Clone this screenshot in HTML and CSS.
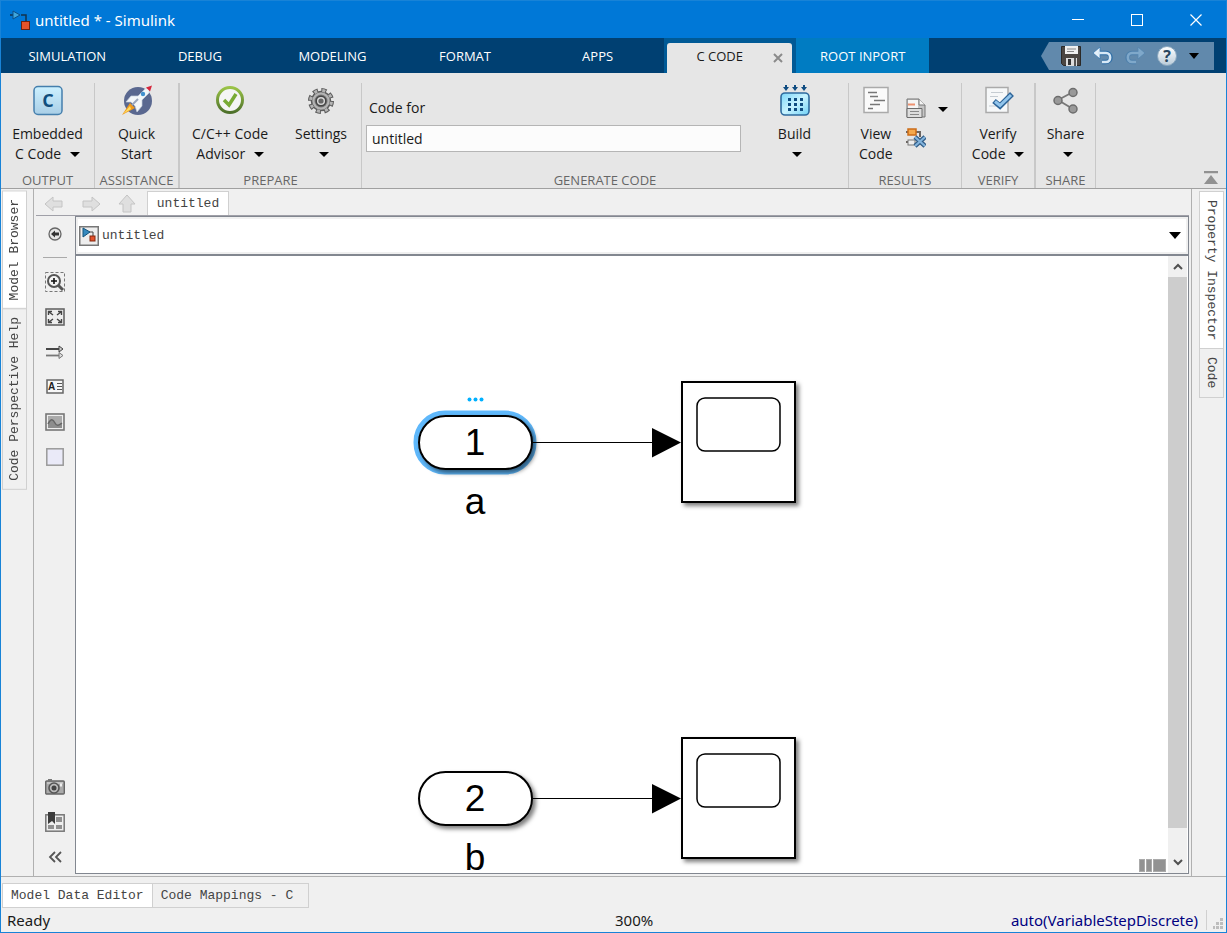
FILE: index.html
```html
<!DOCTYPE html>
<html lang="en">
<head>
<meta charset="utf-8">
<title>untitled * - Simulink</title>
<link rel="stylesheet" href="styles.css">
</head>
<body>
<div class="window">
  <header class="titlebar">
    <svg class="app-icon" width="20" height="20" viewBox="0 0 20 20"><path d="M0 5h5M11 5h5v6" fill="none" stroke="#12324e" stroke-width="1.5"/><path d="M3 1l7 4-7 4z" fill="#3fa6dc" stroke="#0d4f86"/><rect x="11.500" y="11.500" width="8" height="8" fill="#e5532a" stroke="#6d2210"/></svg>
    <h1 class="title">untitled * - Simulink</h1>
    <div class="window-buttons">
      <button aria-label="Minimize"><svg width="12" height="12"><path d="M0 5.500h12" stroke="#fff"/></svg></button>
      <button aria-label="Maximize"><svg width="12" height="12"><rect x=".5" y=".5" width="11" height="11" fill="none" stroke="#fff"/></svg></button>
      <button aria-label="Close"><svg width="12" height="12"><path d="M.5.5l11 11M11.500.5l-11 11" stroke="#fff" stroke-width="1.200"/></svg></button>
    </div>
  </header>

  <div class="tabbar">
    <nav class="tabs">
      <button class="tab">SIMULATION</button>
      <button class="tab">DEBUG</button>
      <button class="tab">MODELING</button>
      <button class="tab">FORMAT</button>
      <button class="tab">APPS</button>
      <div class="tab-slot">
        <button class="tab tab-active">C CODE</button>
        <button class="tab-close" aria-label="Close tab"><svg width="10" height="10"><path d="M1 1l8 8M9 1l-8 8" stroke="#8a8a8a" stroke-width="2"/></svg></button>
      </div>
      <button class="tab tab-context">ROOT INPORT</button>
    </nav>
    <div class="quick">
      <svg class="quick-tip" width="8" height="28"><path d="M8 0L0 14l8 14z" fill="#6189ac"/></svg>
      <div class="quick-body">
        <button aria-label="Save"><svg width="20" height="20"><path d="M.5.5h19v19h-17l-2-2z" fill="#4b4642" stroke="#2b2927"/><rect x="4" y="0" width="13" height="8" fill="#efefef"/><path d="M6 3h9M6 5.500h7" stroke="#888"/><rect x="5" y="12" width="11" height="8" fill="#ddd"/><rect x="7" y="13" width="3" height="6" fill="#333"/><rect x="13" y="12" width="2" height="8" fill="#555"/></svg></button>
        <button aria-label="Undo"><svg width="20" height="18"><g fill="none" stroke="#2f6ea6" stroke-width="4.500"><path d="M5 6h8c6 0 6 9 0 9h-4"/></g><path d="M7 0v12L0 6z" fill="#e6f1fa" stroke="#3b7ab0" stroke-width=".8"/><path d="M5 6h8c5.500 0 5.500 9 0 9h-4" fill="none" stroke="#d8e9f7" stroke-width="2.600"/></svg></button>
        <button aria-label="Redo"><svg width="20" height="18"><path d="M15 6H7c-6 0-6 9 0 9h4" fill="none" stroke="#4f80ab" stroke-width="4.500"/><path d="M13 0v12l7-6z" fill="#7fa8ca" stroke="#5585ae" stroke-width=".8"/><path d="M15 6H7c-5.500 0-5.500 9 0 9h4" fill="none" stroke="#7fa8ca" stroke-width="2.600"/></svg></button>
        <button aria-label="Help"><svg width="20" height="20"><defs><linearGradient id="help" x2="0" y2="1"><stop stop-color="#fff"/><stop offset="1" stop-color="#b9cbd9"/></linearGradient></defs><circle cx="10" cy="10" r="9.500" fill="url(#help)" stroke="#87a5bd"/><text x="10" y="16" class="help-mark">?</text></svg></button>
        <button aria-label="More help"><svg width="10" height="6"><path d="M0 0h10L5 6z"/></svg></button>
      </div>
    </div>
  </div>

  <section class="ribbon">
    <div class="group group-output">
      <button class="tool">
        <svg width="32" height="32"><defs><linearGradient id="cc" x2="0" y2="1"><stop stop-color="#cdf1ff"/><stop offset="1" stop-color="#a9cee6"/></linearGradient></defs><rect x="2" y="1.500" width="28" height="28" rx="4" fill="url(#cc)" stroke="#457fad" stroke-width="1.500"/><text x="16" y="22" class="c-mark">C</text></svg>
        <span>Embedded</span><span>C Code <i class="caret"></i></span>
      </button>
      <p class="group-name">OUTPUT</p>
    </div>
    <div class="group group-assist">
      <button class="tool">
        <svg width="32" height="32"><circle cx="17" cy="16" r="14" fill="#5a6890"/><path d="M9 18L1 30l13-7z" fill="#ef9a1d"/><path d="M9 21L2 29l8-5z" fill="#fddc62"/><path d="M5 17l5-6h7l7-7 5-1-1 5-7 7v6l-5 6-2-6-4-4z" fill="#f4f7fa" stroke="#c3cddb" stroke-width=".7"/><path d="M25 2.500l6-2-2 6z" fill="#d6263b"/><circle cx="22" cy="9" r="2.200" fill="#4191cf"/><path d="M11 20l6-6" stroke="#9aa6bc" stroke-width="2"/></svg>
        <span>Quick</span><span>Start</span>
      </button>
      <p class="group-name">ASSISTANCE</p>
    </div>
    <div class="group group-prepare">
      <div class="tools">
        <button class="tool">
          <svg width="32" height="32"><defs><linearGradient id="ok" x2="0" y2="1"><stop stop-color="#9ac347"/><stop offset="1" stop-color="#4d702a"/></linearGradient></defs><circle cx="16" cy="15" r="12.500" fill="#f5f5f5" stroke="url(#ok)" stroke-width="3"/><path d="M10 15l5 5 7-11" fill="none" stroke="#79ab35" stroke-width="3.500"/></svg>
          <span>C/C++ Code</span><span>Advisor <i class="caret"></i></span>
        </button>
        <button class="tool">
          <svg width="32" height="32"><g transform="translate(16 16)"><circle r="11" fill="none" stroke="#5c5c5c" stroke-width="4" stroke-dasharray="5.200 3.439"/><circle r="9.500" fill="#b4b4b4" stroke="#5c5c5c" stroke-width="1.600"/><circle r="10.500" fill="none" stroke="#b4b4b4" stroke-width="3" stroke-dasharray="3 5.247" stroke-dashoffset="-1"/><circle r="6.500" fill="#777"/><circle r="4.800" fill="#d8d8d8" stroke="#444" stroke-width="1.500"/><circle r="2.600" fill="#666"/></g></svg>
          <span>Settings</span><span><i class="caret"></i></span>
        </button>
      </div>
      <p class="group-name">PREPARE</p>
    </div>
    <div class="group group-generate">
      <div class="tools">
        <div class="field">
          <label for="model">Code for</label>
          <input id="model" type="text" value="untitled">
        </div>
        <button class="tool tool-build">
          <svg width="32" height="32"><defs><linearGradient id="bd" x2="1" y2="1"><stop stop-color="#7bd6fa"/><stop offset=".5" stop-color="#c8f3ff"/><stop offset="1" stop-color="#6fd0f5"/></linearGradient></defs><rect x="2" y="8" width="28" height="22" rx="4" fill="url(#bd)" stroke="#2f6b9f" stroke-width="1.600"/><g fill="#0f4c81"><path d="M6 0h2v2h2l-3 4-3-4h2zM15 0h2v2h2l-3 4-3-4h2zM24 0h2v2h2l-3 4-3-4h2z"/><path d="M9 13h3v3H9zM15 13h3v3h-3zM21 13h3v3h-3zM9 18h3v3H9zM15 18h3v3h-3zM21 18h3v3h-3zM9 23h3v3H9zM15 23h3v3h-3zM21 23h3v3h-3z"/></g></svg>
          <span>Build</span><span><i class="caret"></i></span>
        </button>
      </div>
      <p class="group-name">GENERATE CODE</p>
    </div>
    <div class="group group-results">
      <div class="tools">
        <button class="tool">
          <svg width="32" height="32"><rect x="4" y="2.500" width="24" height="25" fill="#fafafa" stroke="#aaa" stroke-width="1.500"/><path d="M8 7.500h9M10 11.500h8M14 15.500h7M19 15.500h6M10 19.500h10M8 23.500h5" stroke="#777" stroke-width="1.300"/></svg>
          <span>View</span><span>Code</span>
        </button>
        <div class="small-tools">
          <button aria-label="Open report"><svg width="20" height="20"><path d="M1 1h12l6 6v12H1z" fill="#c6c6c6" stroke="#777"/><path d="M2 2h10v9H2z" fill="#f5f5f5"/><path d="M2 6.500h7" stroke="#ee9270" stroke-width="2"/><path d="M13 1v6h6" fill="#f4f4f4" stroke="#777"/><path d="M1 10.500h15v9H1z" fill="#ddd" stroke="#6c6c6c"/><path d="M4 13.500h9M4 16.500h9" stroke="#888"/></svg></button>
          <button aria-label="Report options"><i class="caret"></i></button>
          <button aria-label="Remove highlighting"><svg width="20" height="20"><path d="M0 4h14v5M0 14h8" fill="none" stroke="#6b6560" stroke-width="2"/><rect x="2" y="1" width="8" height="6" fill="#f5a94c" stroke="#cb6c18" stroke-width="1.500"/><rect x="2" y="12" width="7" height="5" fill="#eee" stroke="#777"/><path d="M9 9l10 9M19 9L9 18" stroke="#315d87" stroke-width="4.500"/><path d="M9 9l10 9M19 9L9 18" stroke="#82b3dc" stroke-width="2.200"/></svg></button>
        </div>
      </div>
      <p class="group-name">RESULTS</p>
    </div>
    <div class="group group-verify">
      <button class="tool">
        <svg width="32" height="32"><rect x="4" y="2.500" width="22" height="25" fill="#f6f8f9" stroke="#aaa" stroke-width="1.500"/><path d="M9 7.500h12M8 11.500h8M7 21h7" stroke="#c5ccd2"/><path d="M12 16l6 5L30 9" fill="none" stroke="#2d6498" stroke-width="5.500"/><path d="M13 16.500l5 4L29 10" fill="none" stroke="#92c5ec" stroke-width="3"/></svg>
        <span>Verify</span><span>Code <i class="caret"></i></span>
      </button>
      <p class="group-name">VERIFY</p>
    </div>
    <div class="group group-share">
      <button class="tool">
        <svg width="32" height="32"><path d="M23 7L8 15l15 9" fill="none" stroke="#777" stroke-width="1.800"/><g fill="#999" stroke="#6d6d6d" stroke-width="1.500"><circle cx="23" cy="7.500" r="4"/><circle cx="8" cy="15.500" r="4"/><circle cx="23" cy="24" r="4"/></g></svg>
        <span>Share</span><span><i class="caret"></i></span>
      </button>
      <p class="group-name">SHARE</p>
    </div>
    <div class="ribbon-end">
      <button aria-label="Collapse ribbon"><svg width="14" height="13"><path d="M0 1h14" stroke="#919191" stroke-width="2.500"/><path d="M7 4l7 9H0z" fill="#919191"/></svg></button>
    </div>
  </section>

  <main class="workspace">
    <aside class="dock dock-left">
      <button class="side-tab side-selected">Model Browser</button>
      <button class="side-tab">Code Perspective Help</button>
    </aside>

    <div class="editor">
      <div class="nav">
        <div class="nav-arrows">
          <button aria-label="Back"><svg width="20" height="16"><path d="M1 8l8-7v4h9v6H9v4z" fill="#dfdfdf" stroke="#c4c4c4"/></svg></button>
          <button aria-label="Forward"><svg width="20" height="16"><path d="M19 8l-8-7v4H2v6h9v4z" fill="#dfdfdf" stroke="#c4c4c4"/></svg></button>
          <button aria-label="Up"><svg width="18" height="20"><path d="M9 1l8 9h-4v8H5v-8H1z" fill="#dfdfdf" stroke="#c4c4c4"/></svg></button>
        </div>
        <button class="doc-tab">untitled</button>
      </div>

      <div class="editor-body">
        <div class="palette">
          <button aria-label="Hide browser"><svg width="14" height="14"><circle cx="7" cy="7" r="6" fill="#e6e6e6" stroke="#666" stroke-width="1.300"/><path d="M3 7l4-3.500v2h4v3H7v2z" fill="#333"/></svg></button>
          <hr>
          <button aria-label="Zoom"><svg width="20" height="20"><rect x=".5" y=".5" width="19" height="19" fill="none" stroke="#777" stroke-dasharray="3 2"/><circle cx="9" cy="9" r="6" fill="#f4f4f4" stroke="#555" stroke-width="2"/><path d="M13 13l5 5" stroke="#555" stroke-width="3"/><path d="M6 9h6M9 6v6" stroke="#111" stroke-width="1.600"/></svg></button>
          <button aria-label="Fit to view"><svg width="20" height="18"><rect x="1" y="1" width="18" height="16" fill="#eee" stroke="#666" stroke-width="1.600"/><path d="M3.500 7V3.500H7M4 4l4 3M13 3.500h3.500V7M16 4l-4 3M3.500 11v3.500H7M4 14l4-3M13 14.500h3.500V11M16 14l-4-3" fill="none" stroke="#444" stroke-width="1.400"/></svg></button>
          <button aria-label="Sample time"><svg width="20" height="14"><path d="M1 4h16" stroke="#333" stroke-width="1.800"/><path d="M1 10.500h16" stroke="#777" stroke-width="1.800"/><path d="M14 1l4 3-4 3z" fill="#ccc" stroke="#444"/><path d="M14 7.500l4 3-4 3z" fill="#ddd" stroke="#777"/></svg></button>
          <button aria-label="Annotation"><svg width="18" height="15"><rect x="1" y="1" width="16" height="13" fill="#f7f7f7" stroke="#666" stroke-width="1.500"/><text x="2" y="11" class="a-mark">A</text><path d="M11 4.500h5M11 7.500h5M11 10.500h5" stroke="#555"/></svg></button>
          <button aria-label="Image"><svg width="20" height="18"><rect x="1" y="1" width="18" height="16" fill="#eee" stroke="#777" stroke-width="1.600"/><path d="M3 3h14v12H3z" fill="#aaa"/><path d="M3 11c3-6 5-5 7-1s4 2 7 0v5H3z" fill="#8d8d8d"/><path d="M3 11c3-6 5-5 7-1s4 2 7 0" fill="none" stroke="#666" stroke-width="1.500"/></svg></button>
          <button aria-label="Area"><svg width="18" height="18"><rect x=".8" y=".8" width="16.400" height="16.400" fill="#eaeaf8" stroke="#999" stroke-width="1.500"/></svg></button>
          <span class="palette-space"></span>
          <button aria-label="Screenshot"><svg width="20" height="16"><rect x=".7" y="2" width="18.600" height="13" rx="1" fill="#aaa" stroke="#666" stroke-width="1.400"/><path d="M3 0h4v2H3z" fill="#777"/><path d="M2 4h16" stroke="#ddd"/><circle cx="9" cy="9" r="5" fill="#bbb" stroke="#555" stroke-width="1.600"/><circle cx="9" cy="9" r="2.500" fill="#444"/><path d="M16 4.500v3" stroke="#eee" stroke-width="2"/></svg></button>
          <button aria-label="Bookmarks"><svg width="20" height="20"><rect x=".8" y="2.800" width="18.400" height="16.400" fill="#eee" stroke="#777" stroke-width="1.500"/><path d="M11 5h6v5h-6zM3 13h6v4H3zM11 13h6v4h-6z" fill="#909090"/><path d="M3 0h7v12l-3-3-4 3z" fill="#3c3c3c"/></svg></button>
          <button aria-label="Collapse palette"><svg width="14" height="12"><path d="M7 1L2 6l5 5M13 1L8 6l5 5" fill="none" stroke="#555" stroke-width="1.800"/></svg></button>
        </div>

        <div class="stage">
          <div class="pathbar">
            <svg width="20" height="20"><rect x=".75" y=".75" width="18.500" height="18.500" fill="#eee" stroke="#777" stroke-width="1.500"/><path d="M10 6h4v4" fill="none" stroke="#444"/><path d="M4 2l7 4-7 5z" fill="#3589be" stroke="#15547d"/><rect x="11" y="10" width="5" height="5" fill="#e4522c" stroke="#84290f"/></svg>
            <select aria-label="Model path"><option>untitled</option></select>
            <svg class="path-caret" width="12" height="7"><path d="M0 0h12L6 7z"/></svg>
          </div>
          <div class="canvas-row">
            <div class="canvas">
              <svg class="diagram">
                <defs>
                  <filter id="shadow" x="-20%" y="-20%" width="150%" height="150%"><feDropShadow dx="3" dy="3" stdDeviation="2" flood-opacity=".5"/></filter>
                  <g id="scope">
                    <rect x="606" y="126" width="113" height="120" fill="#fff" stroke="#000" stroke-width="2" filter="url(#shadow)"/>
                    <rect x="621" y="142" width="83" height="53" rx="8" fill="#fff" stroke="#000" stroke-width="1.500"/>
                    <path d="M457 186.500h120" stroke="#000"/>
                    <path d="M576 172l29 14.500-29 15z"/>
                  </g>
                </defs>
                <rect x="340" y="157" width="118" height="59" rx="29" fill="none" stroke="#5fb8fb" stroke-width="5"/>
                <rect x="343" y="160" width="113" height="53" rx="26.500" fill="#fff" stroke="#000" stroke-width="2" filter="url(#shadow)"/>
                <g fill="#00b0ff"><circle cx="393.500" cy="143.500" r="2"/><circle cx="399.500" cy="143.500" r="2"/><circle cx="405.500" cy="143.500" r="2"/></g>
                <text x="399" y="199">1</text>
                <text x="399" y="258">a</text>
                <use href="#scope"/>
                <rect x="343" y="516" width="113" height="53" rx="26.500" fill="#fff" stroke="#000" stroke-width="2" filter="url(#shadow)"/>
                <text x="399" y="555">2</text>
                <text x="399" y="614">b</text>
                <use href="#scope" y="356"/>
              </svg>
              <div class="meter"><i></i><i></i><i class="wide"></i></div>
            </div>
            <div class="scrollbar">
              <button aria-label="Scroll up"><svg width="10" height="7"><path d="M1 6l4-4 4 4" fill="none" stroke="#505050" stroke-width="2"/></svg></button>
              <div class="thumb"></div>
              <button class="scroll-down" aria-label="Scroll down"><svg width="10" height="7"><path d="M1 1l4 4 4-4" fill="none" stroke="#505050" stroke-width="2"/></svg></button>
            </div>
          </div>
        </div>
      </div>
    </div>

    <aside class="dock dock-right">
      <button class="side-tab side-selected">Property Inspector</button>
      <button class="side-tab">Code</button>
    </aside>
  </main>

  <div class="bottom-tabs">
    <button class="bottom-tab bottom-selected">Model Data Editor</button>
    <button class="bottom-tab">Code Mappings - C</button>
  </div>
  <footer class="status">
    <span>Ready</span>
    <span class="zoom">300%</span>
    <span class="solver">auto(VariableStepDiscrete)</span>
    <svg class="grip" width="10" height="11" fill="#bdbdbd"><path d="M7 0h3v3H7zM7 4h3v3H7zM7 8h3v3H7zM3 4h3v3H3zM3 8h3v3H3zM0 8h2v3H0z"/></svg>
  </footer>
</div>
</body>
</html>
```

FILE: styles.css
```css
* { box-sizing: border-box; }

body {
  margin: 0;
  font-family: "Open Sans", "Noto Sans", sans-serif;
  font-size: 14px;
  color: #1a1a1a;
}

button {
  margin: 0;
  padding: 0;
  border: 0;
  background: none;
  color: inherit;
  font: inherit;
}

svg { display: block; }

.window {
  display: flex;
  flex-direction: column;
  height: 100vh;
  border: 1px solid #1883d7;
  background: #f0f0f0;
}

/* Title bar */
.titlebar {
  display: flex;
  align-items: center;
  height: 37px;
  padding: 0 1px 0 9px;
  background: #0078d7;
  color: #fff;
}
.title {
  flex: 1;
  margin: 0 0 0 5px;
  font-family: "Noto Sans", sans-serif;
  font-size: 15px;
  font-weight: 400;
}
.window-buttons { display: flex; }
.window-buttons button {
  display: grid;
  place-items: center;
  width: 59px;
  height: 37px;
}

/* Tab bar */
.tabbar {
  display: flex;
  height: 35px;
  background: #004072;
}
.tabs { display: flex; flex: 1; }
.tab {
  flex: 1;
  color: #fff;
  font-size: 13px;
  font-weight: 500;
}
.tab-slot {
  display: flex;
  flex: 1;
  position: relative;
  background: #005a96;
}
.tab-active {
  margin: 5px 4px 0 3px;
  padding: 0 20px 5px 0;
  border-radius: 3px 3px 0 0;
  background: #e6e6e6;
  color: #1a1a1a;
  font-weight: 400;
}
.tab-close { position: absolute; right: 13px; top: 15px; }
.tab-context { background: #007cc2; }

.quick {
  display: flex;
  justify-content: flex-end;
  width: 297px;
  padding: 4px 12px 3px 0;
}
.quick-body {
  display: flex;
  align-items: center;
  gap: 12px;
  padding: 0 15px 0 12px;
  background: #6189ac;
}
.help-mark { font: bold 16px "Open Sans", sans-serif; text-anchor: middle; fill: #28465f; }

/* Ribbon */
.ribbon {
  display: flex;
  height: 116px;
  padding-top: 10px;
  border-bottom: 1px solid #a0a0a0;
  background: #e6e6e6;
}
.group {
  display: flex;
  flex-direction: column;
  justify-content: space-between;
  border-right: 1px solid #c8c8c8;
}
.group-output { width: 94px; }
.group-assist { width: 85px; border-right-width: 2px; }
.group-prepare { width: 182px; }
.group-generate { flex: 1; }
.group-results { width: 113px; }
.group-verify { width: 74px; border-right-width: 2px; }
.group-share { width: 60px; }
.group-name {
  margin: 0;
  color: #666;
  font-size: 13px;
  line-height: 16px;
  text-align: center;
}
.tools { display: flex; }
.tool {
  display: flex;
  flex-direction: column;
  align-items: center;
  line-height: 20px;
  padding-top: 2px;
}
.tool svg { margin-bottom: 7px; }
.tool span { min-height: 20px; white-space: nowrap; }
.caret {
  display: inline-block;
  margin-left: 4px;
  border: 5px solid transparent;
  border-top-color: #000;
  border-bottom-width: 0;
  vertical-align: 2px;
}
.tool .caret:only-child { margin-left: 5px; }
.tool span:last-child { min-width: 10px; }
.tool span > .caret:first-child { margin-right: 0; }
.group-prepare .tools { justify-content: space-between; padding: 0 14px 0 12px; }
.c-mark { font: bold 18px "Open Sans", sans-serif; text-anchor: middle; fill: #104e7d; }
.group-generate .tools { justify-content: space-between; }
.field {
  display: flex;
  flex: 1;
  flex-direction: column;
  gap: 7px;
  padding: 15px 0 0 4px;
}
.field label { padding-left: 3px; line-height: 20px; }
.field input {
  height: 27px;
  padding: 0 5px;
  border: 1px solid #b5b5b5;
  background: #fcfcfc;
  color: #1a1a1a;
  font: inherit;
}
.tool-build { width: 107px; }
.group-results .tools { padding-left: 10px; gap: 13px; }
.small-tools {
  display: grid;
  grid-template-columns: 21px 33px;
  grid-template-rows: 20px 20px;
  gap: 10px 0;
  padding-top: 15px;
  place-items: center;
}
.small-tools .caret { margin: 0; }
.ribbon-end {
  display: flex;
  justify-content: flex-end;
  align-items: flex-end;
  width: 130px;
  padding: 0 8px 4px 0;
}

/* Workspace */
.workspace {
  display: flex;
  flex: 1;
  min-height: 0;
  border-bottom: 1px solid #b0b0b0;
}
.side-tab, .doc-tab, .bottom-tab, .pathbar select {
  font-family: "Liberation Mono", monospace;
  font-size: 13px;
  color: #444;
}
.dock { display: flex; flex-direction: column; }
.dock-left {
  width: 33px;
  padding: 1px 6px 0 1px;
  border-right: 1px solid #b0b0b0;
}
.dock-right {
  width: 35px;
  padding: 2px 2px 0 7px;
  border-left: 1px solid #b0b0b0;
}
.side-tab {
  width: 25px;
  padding: 8px 0;
  border: 1px solid #d0d0d0;
  writing-mode: vertical-rl;
  text-align: center;
}
.side-tab + .side-tab { margin-top: -1px; }
.dock-left .side-tab { transform: rotate(180deg); }
.side-selected, .bottom-selected { background: #fff; }

.editor {
  display: flex;
  flex: 1;
  flex-direction: column;
  min-width: 0;
  padding: 0 2px 2px;
}
.nav {
  display: flex;
  align-items: flex-end;
  height: 27px;
  border-bottom: 1px solid #a0a0a8;
}
.nav-arrows {
  display: flex;
  align-items: center;
  gap: 17px;
  height: 22px;
  padding: 0 11px 0 8px;
}
.doc-tab {
  width: 82px;
  height: 24px;
  border: 1px solid #d0d0d0;
  border-bottom: 0;
  background: #fff;
}
.editor-body { display: flex; flex: 1; min-height: 0; }
.palette {
  display: flex;
  flex-direction: column;
  width: 39px;
  padding-right: 2px;
}
.palette button {
  display: grid;
  place-items: center;
  height: 35px;
}
.palette hr {
  align-self: center;
  width: 24px;
  height: 1px;
  margin: 6px 0;
  border: 0;
  background: #aaa;
}
.palette-space { flex: 1; }
.a-mark { font: bold 10px "Liberation Sans", sans-serif; fill: #222; }

.stage {
  display: flex;
  flex: 1;
  flex-direction: column;
  min-width: 0;
  border: 1px solid #828790;
}
.pathbar {
  display: flex;
  align-items: center;
  height: 39px;
  padding: 0 7px 0 3px;
  border-bottom: 2px solid #828790;
  background: #fff;
  box-shadow: inset 0 0 0 2px #f0f0f0;
}
.pathbar select {
  flex: 1;
  padding: 0 3px;
  border: 0;
  background: none;
  appearance: none;
}
.path-caret { pointer-events: none; }
.canvas-row { display: flex; flex: 1; min-height: 0; background: #fff; }
.canvas { position: relative; flex: 1; }
.diagram { position: absolute; width: 100%; height: 100%; overflow: visible; }
.diagram text { font: 37px "Liberation Sans", Arial, sans-serif; text-anchor: middle; }
.meter {
  display: flex;
  gap: 1px;
  position: absolute;
  right: 2px;
  bottom: 1px;
}
.meter i { width: 6px; height: 13px; border: 1px solid #aaa; background: #929292; }
.meter .wide { width: 13px; }
.scrollbar {
  display: flex;
  flex-direction: column;
  width: 20px;
  border-right: 1px solid #fff;
  background: #f0f0f0;
}
.scrollbar button { display: grid; place-items: center; height: 21px; }
.thumb { flex: 1; background: #cdcdcd; }
.scrollbar .scroll-down { height: 45px; padding-top: 23px; }

/* Bottom */
.bottom-tabs { display: flex; padding: 6px 1px 0; }
.bottom-tab {
  height: 25px;
  padding: 0 8px;
  border: 1px solid #d0d0d0;
}
.bottom-tab + .bottom-tab { border-left: 0; padding-right: 15px; }
.status {
  display: grid;
  grid-template-columns: 50% auto 1fr auto;
  align-items: center;
  height: 24px;
  padding: 0 3px 0 6px;
  font-family: "Noto Sans", sans-serif;
  font-size: 15px;
}
.solver {
  padding-right: 8px;
  border-right: 1px solid #d0d0d0;
  color: #000080;
  text-align: right;
}
.grip { align-self: end; margin: 0 0 3px 6px; }
```
